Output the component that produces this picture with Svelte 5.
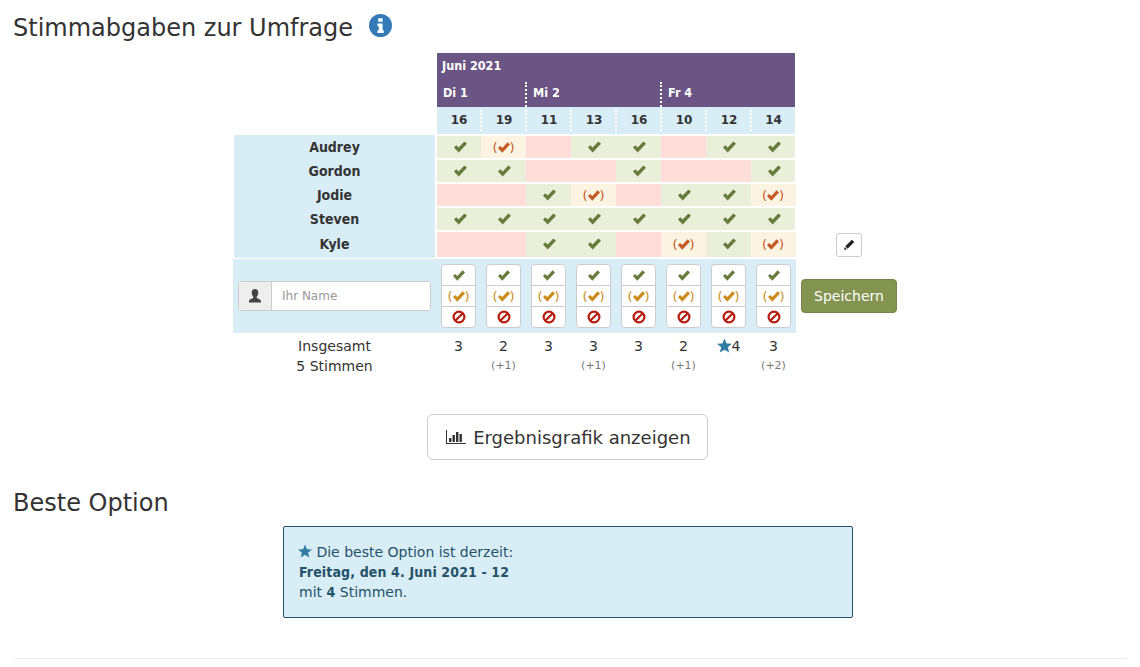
<script>
  const hours = [16, 19, 11, 13, 16, 10, 12, 14];
  const votes = [
    { name: "Audrey", picks: "yinyynyy" },
    { name: "Gordon", picks: "yynnynny" },
    { name: "Jodie", picks: "nnyinyyi" },
    { name: "Steven", picks: "yyyyyyyy" },
    { name: "Kyle", picks: "nnyyniyi" },
  ];
  const totals = [3, 2, 3, 3, 3, 2, 4, 3];
  const maybes = ["", "(+1)", "", "(+1)", "", "(+1)", "", "(+2)"];
  const best = 6;
</script>

{#snippet check()}
  <svg class="check" viewBox="0 0 14 12"><path d="M0 6.6 2.4 4.2 5 6.6 11.2 0 14 2.4 5 12Z" /></svg>
{/snippet}

{#snippet star(cls)}
  <svg class={cls} viewBox="0 0 16 16"><path d="M8 .5 10.2 5.9 16 6.2 11.5 9.9 13 15.500 8 12.400 3 15.500 4.500 9.900 0 6.200 5.800 5.900Z" /></svg>
{/snippet}

<div class="page">
  <h2 class="first">
    Stimmabgaben zur Umfrage
    <svg class="info" viewBox="0 0 24 24">
      <circle cx="12" cy="12" r="12" />
      <path d="M9.600 4.400h4.600v3.800H9.600ZM8.800 10h5.400v7h1.200v2.800H8.800V17h1.400v-4.200H8.800Z" />
    </svg>
  </h2>

  <table>
    <colgroup>
      <col class="c-name" />
      {#each hours as _}<col class="c-hour" />{/each}
      <col class="c-extra" />
    </colgroup>
    <thead>
      <tr class="month">
        <td></td>
        <th colspan="8">Juni 2021</th>
      </tr>
      <tr class="day">
        <td></td>
        <th colspan="2"><div>Di 1</div></th>
        <th colspan="3"><div class="dots">Mi 2</div></th>
        <th colspan="3"><div class="dots">Fr 4</div></th>
      </tr>
      <tr class="hour">
        <td></td>
        {#each hours as h, i}
          <th><div class:dots={i > 0}>{h}</div></th>
        {/each}
      </tr>
    </thead>
    <tbody>
      {#each votes as v, r}
        <tr class="vote" class:tall={r === votes.length - 1}>
          <th class="name">{v.name}</th>
          {#each v.picks.split("") as p}
            <td class="cell {p}">
              {#if p === "y"}
                {@render check()}
              {:else if p === "i"}
                <span class="paren">(</span>{@render check()}<span class="paren">)</span>
              {/if}
            </td>
          {/each}
          {#if r === votes.length - 1}
            <td class="extra">
              <button class="edit" aria-label="Bearbeiten">
                <svg viewBox="0 0 12 12"><path d="M8.600.8 11.200 3.400 4 10.600 1.400 8ZM.9 8.800 3.200 11.100 0 12Z" /></svg>
              </button>
            </td>
          {:else}
            <td class="extra"></td>
          {/if}
        </tr>
      {/each}
      <tr class="form">
        <td class="who">
          <div class="group">
            <span class="addon">
              <svg viewBox="0 0 14 14"><path d="M7 0C9.200 0 10.300 1.600 10.300 3.700 10.300 5.600 9.400 7 8.700 7.700V8.900C9.800 9.600 13 10.300 13 12.200V13.500H1V12.200C1 10.300 4.200 9.600 5.300 8.900V7.700C4.600 7 3.700 5.600 3.700 3.700 3.700 1.600 4.800 0 7 0Z" /></svg>
            </span>
            <input type="text" placeholder="Ihr Name" />
          </div>
        </td>
        {#each hours as _}
          <td>
            <div class="choice">
              <span class="yes">{@render check()}</span>
              <span class="maybe"><span class="paren">(</span>{@render check()}<span class="paren">)</span></span>
              <span class="ban">
                <svg viewBox="0 0 14 14"><circle cx="7" cy="7" r="5.400" /><path d="M3.200 10.800 10.800 3.200" /></svg>
              </span>
            </div>
          </td>
        {/each}
        <td class="extra"><button class="save">Speichern</button></td>
      </tr>
      <tr class="total first-total">
        <td>Insgesamt</td>
        {#each totals as t, i}
          <td>{#if i === best}{@render star("star")}{/if}{t}</td>
        {/each}
        <td></td>
      </tr>
      <tr class="total">
        <td>5 Stimmen</td>
        {#each maybes as m}
          <td class="small">{m}</td>
        {/each}
        <td></td>
      </tr>
    </tbody>
  </table>

  <div class="chart">
    <button>
      <svg viewBox="0 0 20 14"><path d="M0 0h1v13h19.500v1H0ZM3 8h2.400v4H3ZM6.500 5h2.400v7h-2.400ZM10 2h2.400v10H10ZM13.500 4h2.400v8h-2.400Z" /></svg>
      Ergebnisgrafik anzeigen
    </button>
  </div>

  <h2>Beste Option</h2>

  <div class="alert">
    {@render star("star")} Die beste Option ist derzeit:<br />
    <strong>Freitag, den 4. Juni 2021 - 12</strong><br />
    mit <strong>4</strong> Stimmen.
  </div>

  <hr />
</div>

<style>
  :global(body) {
    font-family: "DejaVu Sans", sans-serif;
    font-size: 14px;
    line-height: 20px;
    color: #333;
    background: #fff;
  }
  .page {
    padding: 0 13px;
  }
  h2 {
    margin: 0;
    font-size: 24px;
    font-weight: 400;
    line-height: 26px;
    color: #333;
  }
  h2.first {
    padding-top: 15px;
    height: 53px;
    box-sizing: border-box;
  }
  .info {
    width: 23px;
    height: 23px;
    margin-top: -1px;
    margin-left: 8px;
    vertical-align: top;
  }
  .info circle {
    fill: #337ab7;
  }
  .info path {
    fill: #fff;
  }

  table {
    border-collapse: separate;
    border-spacing: 0;
    table-layout: fixed;
    width: 669px;
    margin-left: 220px;
  }
  .c-name {
    width: 203px;
  }
  .c-hour {
    width: 45px;
  }
  .c-extra {
    width: 106px;
  }
  td,
  th {
    padding: 0;
  }
  th,
  strong {
    font-family: "DejaVu Sans Condensed", "DejaVu Sans", sans-serif;
    font-weight: 700;
  }

  .month th,
  .day th {
    background: #6b5585;
    color: #fff;
    font-size: 12.5px;
    text-align: left;
    height: 27px;
  }
  .month th {
    height: 25px;
    padding-left: 5px;
    padding-bottom: 2px;
    border-left: 1px solid #fff;
    border-right: 1px solid #fff;
  }
  .day th:nth-child(2),
  .hour th:nth-child(2) {
    border-left: 1px solid #fff;
  }
  .day th:last-child,
  .hour th:last-child {
    border-right: 1px solid #fff;
  }
  .day div {
    height: 25px;
    margin-top: 2px;
    line-height: 21px;
    padding-left: 6px;
  }
  .day div.dots {
    margin-left: -1px;
    border-left: 2px dotted #fff;
  }
  .hour th {
    background: #d9edf7;
    font-family: "DejaVu Sans", sans-serif;
    font-size: 12px;
    text-align: center;
    height: 21px;
    padding: 3px 0;
    box-sizing: content-box;
    border-bottom: 1px solid #fff;
  }
  .hour td {
    border-bottom: 1px solid #fff;
  }
  .hour div {
    height: 21px;
    line-height: 21px;
  }
  .hour div.dots {
    margin-left: -1px;
    border-left: 2px dotted #fff;
  }

  .vote {
    height: 24px;
  }
  .vote.tall {
    height: 27px;
  }
  .name {
    background: #d9edf7;
    font-size: 14px;
    text-align: center;
    border-left: 1px solid #fff;
    border-right: 1px solid #fff;
  }
  .tall .name {
    padding-bottom: 1px;
  }
  .cell {
    text-align: center;
    line-height: 1;
    border-top: 1px solid #fff;
    border-bottom: 1px solid #fff;
    font-size: 13px;
    white-space: nowrap;
  }
  .cell:nth-child(2) {
    border-left: 1px solid #fff;
  }
  .cell:nth-child(9) {
    border-right: 1px solid #fff;
  }
  .cell.i:nth-child(9) {
    border-right-color: #fdf3e3;
  }
  .cell.y {
    background: #e9efd9;
  }
  .cell.n {
    background: #ffdeda;
  }
  .cell.i {
    background: #fdf3e3;
  }
  .check {
    width: 13px;
    height: 12px;
    fill: #667b3c;
    vertical-align: -1px;
    margin-left: 2px;
  }
  .cell.i .check,
  .choice .check {
    width: 12px;
    height: 11px;
    margin: 0;
  }
  .cell.i .check {
    fill: #c35a24;
  }
  .paren {
    color: #c35a24;
    font-size: 13px;
  }

  .extra {
    text-align: center;
    line-height: 1;
  }
  .edit {
    width: 26px;
    height: 24px;
    padding: 0;
    background: #fff;
    border: 1px solid #ccc;
    border-radius: 3px;
    vertical-align: middle;
  }
  .edit svg {
    width: 11px;
    height: 11px;
    fill: #222;
    display: block;
    margin: auto;
  }

  .form {
    height: 75px;
  }
  .form > td:not(.extra) {
    background: #d9edf7;
    border-top: 1px solid #fff;
    vertical-align: middle;
  }
  .group {
    display: flex;
    height: 30px;
    margin: 0 5px;
    box-sizing: border-box;
    border: 1px solid #ccc;
    border-radius: 3px;
    overflow: hidden;
    background: #fff;
  }
  .addon {
    width: 32px;
    flex: none;
    background: #eee;
    border-right: 1px solid #ccc;
    display: flex;
    align-items: center;
    justify-content: center;
  }
  .addon svg {
    width: 14px;
    height: 14px;
    fill: #444;
  }
  input {
    flex: 1;
    min-width: 0;
    border: 0;
    outline: 0;
    padding: 0 10px;
    font: 12px "DejaVu Sans", sans-serif;
    color: #555;
    background: #fff;
  }
  input::placeholder {
    color: #999;
  }
  .choice {
    width: 35px;
    height: 64px;
    margin: 0 auto;
    box-sizing: border-box;
    border: 1px solid #ccc;
    border-radius: 4px;
    background: #fff;
    display: flex;
    flex-direction: column;
  }
  .choice > span {
    flex: 1;
    display: flex;
    align-items: center;
    justify-content: center;
    line-height: 1;
  }
  .choice > span + span {
    border-top: 1px solid #ccc;
  }
  .maybe .check {
    fill: #cb8c1d;
  }
  .maybe .paren {
    color: #cb8c1d;
  }
  .ban svg {
    width: 14px;
    height: 14px;
    fill: none;
    stroke: #b71c0f;
    stroke-width: 2.2;
  }
  .save {
    width: 96px;
    height: 34px;
    padding: 0;
    background: #839350;
    border: 1px solid #76854a;
    border-radius: 4px;
    color: #fff;
    font: 14px "DejaVu Sans", sans-serif;
    vertical-align: middle;
  }

  .total td {
    height: 20px;
    text-align: center;
  }
  .first-total td {
    padding-top: 3px;
  }
  .total td.small {
    font-size: 11px;
    color: #777;
  }
  .star {
    width: 15px;
    height: 15px;
    fill: #2e7ca3;
    vertical-align: -2px;
  }

  .chart {
    display: flex;
    justify-content: center;
    margin-top: 38px;
    padding-right: 6px;
  }
  .chart button {
    width: 281px;
    height: 46px;
    padding: 0 0 0 2px;
    background: #fff;
    border: 1px solid #ccc;
    border-radius: 6px;
    color: #333;
    font: 18px "DejaVu Sans", sans-serif;
  }
  .chart svg {
    width: 20px;
    height: 14px;
    fill: #333;
    vertical-align: 0;
    margin: 0 1px;
  }

  h2:not(.first) {
    margin-top: 30px;
  }
  .alert {
    width: 570px;
    height: 92px;
    margin: 10px auto 0;
    box-sizing: border-box;
    padding: 15px;
    border: 1px solid #245269;
    border-radius: 2px;
    background: #d9edf7;
    color: #245269;
    transform: translateX(-2px);
  }
  .alert .star {
    width: 14px;
    height: 14px;
    vertical-align: -1px;
    margin-left: -1px;
  }
  .alert strong {
    letter-spacing: 0.13px;
  }
  hr {
    margin: 40px 0 0;
    border: 0;
    border-top: 1px solid #eee;
  }
</style>
